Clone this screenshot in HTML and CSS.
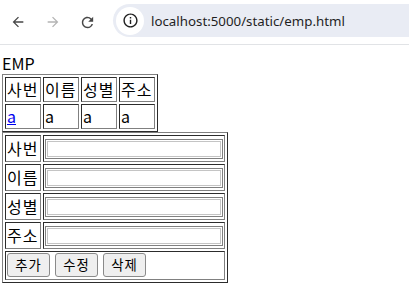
FILE: index.html
```html
<!DOCTYPE html>
<html lang="ko">
<head>
<meta charset="utf-8">
<title>EMP</title>
<link rel="stylesheet" href="styles.css">
</head>
<body>
<div class="chrome">
  <div class="nav">
    <span class="navbtn">
      <svg width="16" height="16" viewBox="0 0 24 24"><path fill="#474747" d="M20 11H7.83l5.59-5.59L12 4l-8 8 8 8 1.41-1.41L7.83 13H20v-2z"/></svg>
    </span>
    <span class="navbtn">
      <svg width="16" height="16" viewBox="0 0 24 24"><path fill="#b4b4b4" d="M4 11h12.17l-5.59-5.59L12 4l8 8-8 8-1.41-1.41L16.17 13H4v-2z"/></svg>
    </span>
    <span class="navbtn">
      <svg width="17" height="17" viewBox="0 0 24 24"><path fill="#474747" d="M17.65 6.35A7.958 7.958 0 0012 4c-4.42 0-7.990 3.58-7.99 8s3.57 8 7.99 8c3.73 0 6.84-2.55 7.730-6h-2.08A5.99 5.99 0 0112 18c-3.31 0-6-2.690-6-6s2.69-6 6-6c1.66 0 3.14.69 4.22 1.78L13 11h7V4l-2.35 2.35z"/></svg>
    </span>
  </div>
  <div class="omni">
    <span class="chip">
      <svg width="17" height="17" viewBox="0 0 24 24"><path fill="#1f1f1f" d="M11 7h2v2h-2zm0 4h2v6h-2zm1-9C6.48 2 2 6.48 2 12s4.48 10 10 10 10-4.48 10-10S17.52 2 12 2zm0 18c-4.41 0-8-3.59-8-8s3.59-8 8-8 8 3.59 8 8-3.59 8-8 8z"/></svg>
    </span>
    <span class="url">localhost:5000/static/emp.html</span>
  </div>
</div>
<div class="page">
  <div class="title">EMP</div>
  <table class="grid list">
    <tr><td class="ko">사번</td><td class="ko">이름</td><td class="ko">성별</td><td class="ko">주소</td></tr>
    <tr><td><a href="#">a</a></td><td>a</td><td>a</td><td>a</td></tr>
  </table>
  <table class="grid form">
    <tr><td class="ko label">사번</td><td><input class="field" type="text"></td></tr>
    <tr><td class="ko label">이름</td><td><input class="field" type="text"></td></tr>
    <tr><td class="ko label">성별</td><td><input class="field" type="text"></td></tr>
    <tr><td class="ko label">주소</td><td><input class="field" type="text"></td></tr>
    <tr><td colspan="2"><div class="actions"><button class="btn">추가</button><button class="btn">수정</button><button class="btn">삭제</button></div></td></tr>
  </table>
</div>
</body>
</html>
```

FILE: styles.css
```css
body {
  margin: 0;
  font-family: "Noto Sans CJK KR", sans-serif;
  font-size: 16px;
  color: #000;
  background: #fff;
}

.chrome {
  height: 44px;
  border-bottom: 1px solid #e1e3e6;
  display: flex;
  align-items: center;
  overflow: hidden;
}

.nav {
  display: flex;
  align-items: center;
}

.navbtn {
  width: 35px;
  height: 33px;
  display: flex;
  align-items: center;
  justify-content: center;
}

.omni {
  margin-left: 8px;
  flex: 1;
  height: 33px;
  margin-top: -3px;
  border-radius: 17px 0 0 17px;
  background: #e9ecf4;
  display: flex;
  align-items: center;
  padding-left: 3px;
}

.chip {
  width: 28px;
  height: 28px;
  border-radius: 50%;
  background: #fff;
  display: flex;
  align-items: center;
  justify-content: center;
}

.url {
  margin-left: 7px;
  font-family: "Noto Sans", sans-serif;
  font-size: 13.3px;
  color: #1f1f1f;
}

.page {
  padding: 8px 0 0 2px;
}

.title {
  line-height: 21px;
}

.grid {
  border: 1px outset gray;
  border-spacing: 2px;
  border-collapse: separate;
}

.grid td {
  border: 1px inset gray;
  padding: 1px;
  vertical-align: middle;
  text-align: left;
}

.ko {
  width: 32px;
  letter-spacing: 1px;
  white-space: nowrap;
}

.list td {
  line-height: 21px;
}

.list a {
  color: #0000ee;
}

.form td {
  line-height: 23px;
}

.field {
  display: block;
  box-sizing: border-box;
  width: 178px;
  height: 20px;
  margin: 2px 0 1px;
  border: 1px solid #808080;
  box-shadow: inset 0 0 0 1px #fff, inset 0 0 0 2px #c4c4c4;
  background: #fff;
}

.actions {
  display: flex;
  align-items: flex-start;
  gap: 5px;
  height: 25px;
}

.btn {
  width: 43px;
  height: 24px;
  padding: 0;
  text-align: center;
  font-family: "Noto Sans CJK KR", sans-serif;
  font-size: 13.33px;
  line-height: 20px;
  letter-spacing: 1px;
  background: #efefef;
  border: 1px solid #8a8a8a;
  border-radius: 3px;
  color: #000;
}
```
